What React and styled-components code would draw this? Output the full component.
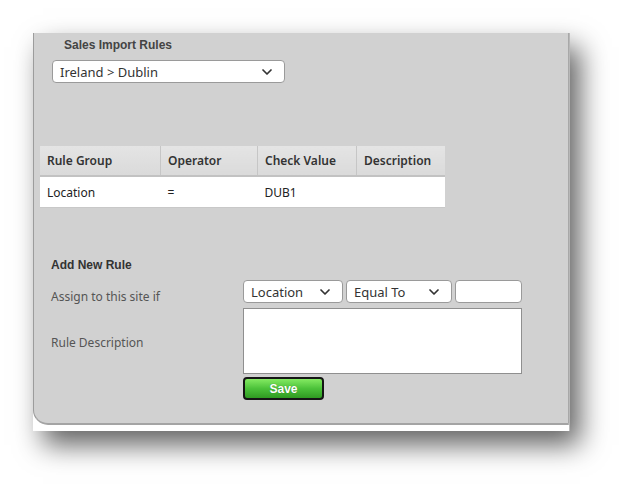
import styled, { createGlobalStyle } from 'styled-components'
import { ChevronDown } from 'lucide-react'

const GlobalStyle = createGlobalStyle`
	html, body {
		margin: 0;
		padding: 0;
		background: #ffffff;
	}
	body {
		font-family: 'Noto Sans', 'Liberation Sans', sans-serif;
	}
`

const Page = styled.div`
	width: 627px;
	height: 497px;
	padding: 33px 0 0 33px;
	box-sizing: border-box;
`

const Card = styled.div`
	width: 537px;
	height: 398px;
	background: #ffffff;
	box-shadow: 10px 14px 26px rgba(0, 0, 0, 0.62);
	border-right: 1px solid #b8b8b8;
	box-sizing: border-box;
	display: flex;
	flex-direction: column;
`

const Panel = styled.div`
	height: 392px;
	box-sizing: border-box;
	background: #d1d1d1;
	border-left: 1px solid #9c9c9c;
	border-bottom: 2px solid #a4a4a4;
	border-right: 1px solid #a8a8a8;
	border-bottom-left-radius: 15px;
	padding: 5px 0 0 0;
	display: flex;
	flex-direction: column;
	align-items: flex-start;
`

const Title = styled.h3`
	margin: 0 0 0 30px;
	font-family: 'Liberation Sans', Arial, sans-serif;
	font-size: 12px;
	line-height: 14px;
	font-weight: bold;
	color: #444;
`

const FakeSelect = styled.div`
	display: flex;
	align-items: center;
	justify-content: space-between;
	box-sizing: border-box;
	width: ${(p) => p.$w}px;
	height: 23px;
	margin-left: ${(p) => p.$ml || 0}px;
	margin-top: ${(p) => p.$mt || 0}px;
	padding: 0 9px 0 7px;
	background: #ffffff;
	border: 1px solid #9a9a9a;
	border-radius: 4px;
	font-size: 13px;
	color: #333;
	svg {
		flex-shrink: 0;
		color: #333;
	}
`

const Table = styled.table`
	margin: 63px 0 0 6px;
	width: 405px;
	border-collapse: collapse;
	font-family: 'Noto Sans', 'Open Sans', sans-serif;
	font-size: 12px;
	color: #222;
	th {
		height: 29px;
		padding: 0 7px;
		text-align: left;
		font-weight: 600;
		color: #333;
		background: linear-gradient(#e4e4e4, #dadada);
		border-right: 1px solid #c6c6c6;
		border-bottom: 2px solid #c2c2c2;
	}
	th:last-child {
		border-right: none;
	}
	td {
		height: 30px;
		padding: 0 7px;
		background: #ffffff;
		vertical-align: middle;
	}
	tbody tr {
		border-bottom: 1px solid #c8c8c8;
	}
`

const SectionTitle = styled.h4`
	margin: 50px 0 0 17px;
	font-family: 'Liberation Sans', Arial, sans-serif;
	font-size: 12px;
	line-height: 14px;
	font-weight: bold;
	color: #333;
`

const Form = styled.div`
	margin: 8px 0 0 17px;
	display: grid;
	grid-template-columns: 192px 280px;
	grid-template-rows: 23px auto;
	row-gap: 5px;
`

const Label = styled.div`
	font-size: 12px;
	line-height: 16px;
	color: #555;
	padding-top: ${(p) => p.$pt}px;
`

const Controls = styled.div`
	display: flex;
	flex-direction: column;
	gap: 3px;
`

const Row = styled.div`
	display: flex;
	gap: 3px;
`

const TextBox = styled.div`
	width: 67px;
	height: 23px;
	box-sizing: border-box;
	background: #fff;
	border: 1px solid #9a9a9a;
	border-radius: 4px;
`

const TextArea = styled.div`
	width: 279px;
	height: 66px;
	box-sizing: border-box;
	background: #fff;
	border: 1px solid #8f8f8f;
`

const SaveButton = styled.button`
	width: 81px;
	height: 23px;
	box-sizing: border-box;
	border: 2px solid #151515;
	border-radius: 4px;
	background: linear-gradient(#84ea62, #4cc23a 50%, #2f9a22);
	color: #ffffff;
	font-family: 'Liberation Sans', Arial, sans-serif;
	font-weight: bold;
	font-size: 12px;
	padding: 0;
	text-shadow: 0 0 1px rgba(0, 0, 0, 0.3);
`

const chevron = <ChevronDown size={16} strokeWidth={2.6} />

const App = () => {
	return (
		<>
			<GlobalStyle />
			<Page>
				<Card>
					<Panel>
						<Title>Sales Import Rules</Title>
						<FakeSelect $w={233} $ml={18} $mt={8}>
							<span>Ireland &gt; Dublin</span>
							{chevron}
						</FakeSelect>

						{/* RULES TABLE */}
						<Table>
							<thead>
								<tr>
									<th style={{ width: 106 }}>Rule Group</th>
									<th style={{ width: 82 }}>Operator</th>
									<th style={{ width: 84 }}>Check Value</th>
									<th>Description</th>
								</tr>
							</thead>
							<tbody>
								<tr>
									<td>Location</td>
									<td>=</td>
									<td>DUB1</td>
									<td></td>
								</tr>
							</tbody>
						</Table>

						<SectionTitle>Add New Rule</SectionTitle>
						<Form>
							<Label $pt={9}>Assign to this site if</Label>
							<Controls>
								<Row>
									<FakeSelect $w={100}>
										<span>Location</span>
										{chevron}
									</FakeSelect>
									<FakeSelect $w={106}>
										<span>Equal To</span>
										{chevron}
									</FakeSelect>
									<TextBox />
								</Row>
							</Controls>
							<Label $pt={27}>Rule Description</Label>
							<Controls>
								<TextArea />
								<SaveButton>Save</SaveButton>
							</Controls>
						</Form>
					</Panel>
				</Card>
			</Page>
		</>
	)
}

export default App
